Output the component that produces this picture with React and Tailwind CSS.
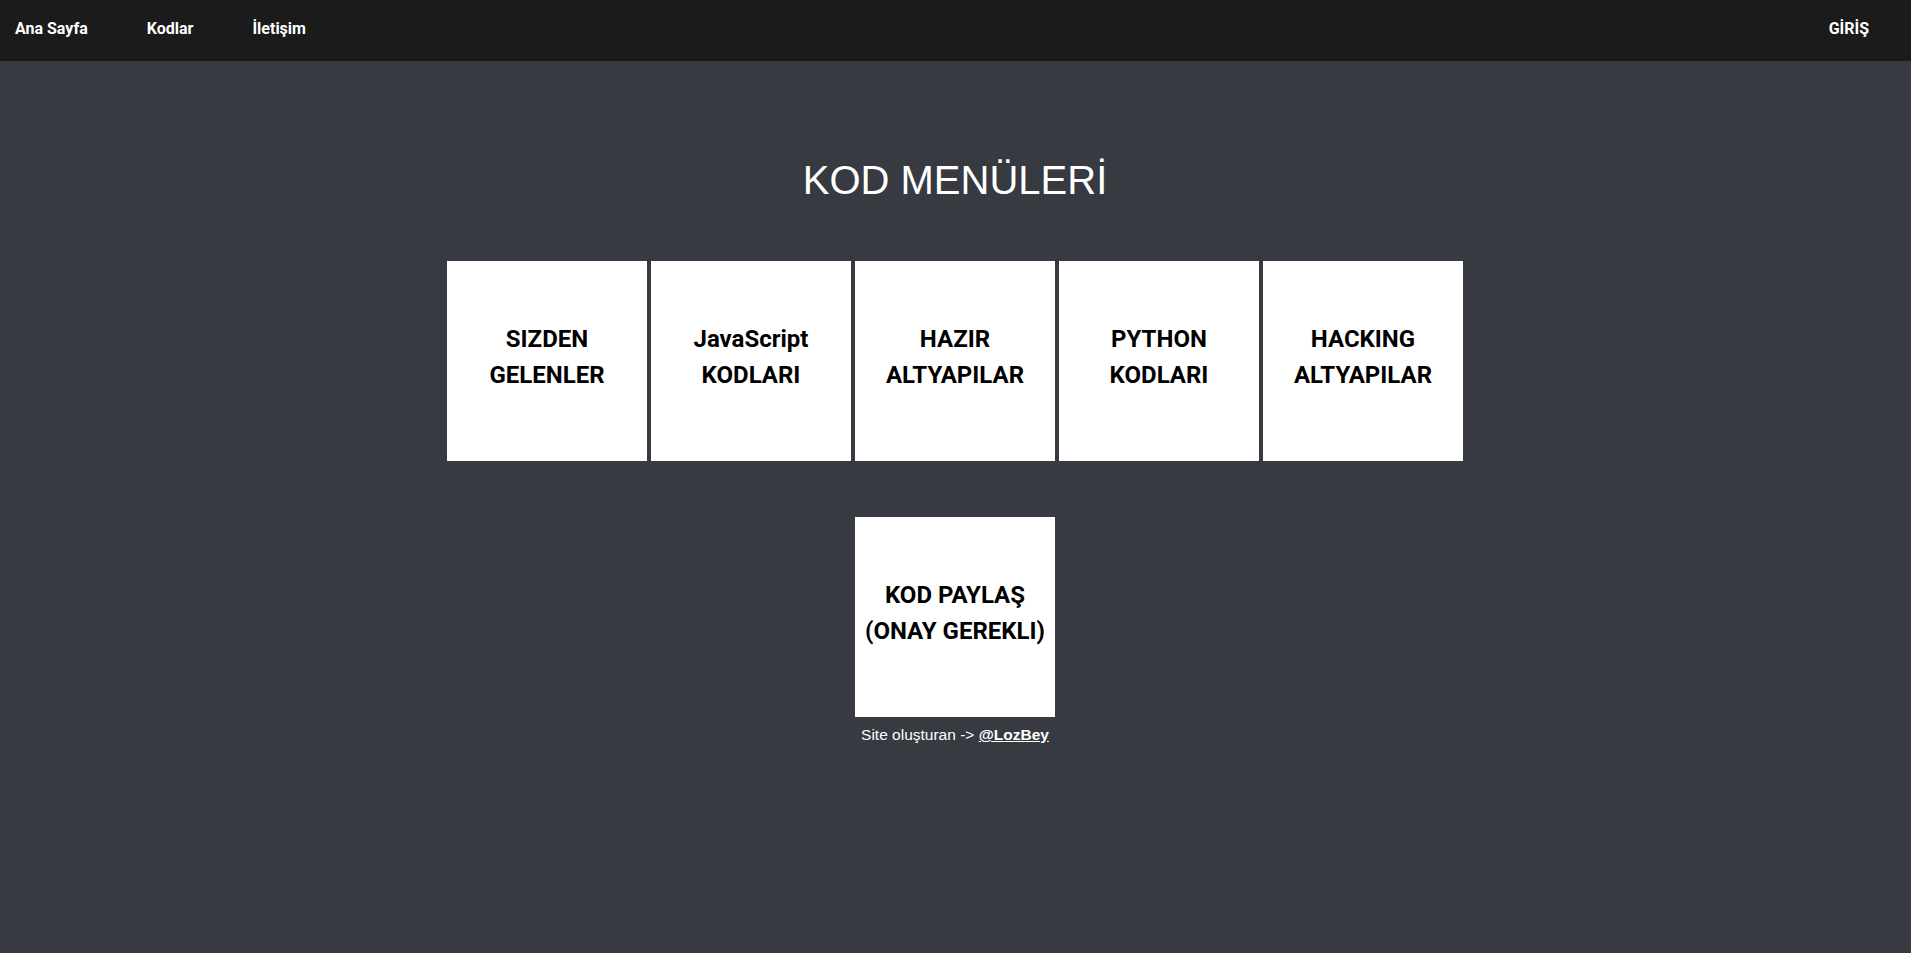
import React from "react";

const boxes = [
  ["SIZDEN", "GELENLER"],
  ["JavaScript", "KODLARI"],
  ["HAZIR", "ALTYAPILAR"],
  ["PYTHON", "KODLARI"],
  ["HACKING", "ALTYAPILAR"],
];

function Box({ lines }) {
  return (
    <div className="w-[200px] h-[200px] bg-white flex items-center justify-center text-center pb-2 cursor-pointer">
      <div className="text-[24px] leading-[36px] font-bold text-black" style={{ fontFamily: "Roboto, sans-serif" }}>
        {lines.map((l, i) => (
          <div key={i}>{l}</div>
        ))}
      </div>
    </div>
  );
}

export default function App() {
  return (
    <div className="min-h-screen bg-[#373a41] flex flex-col" style={{ fontFamily: '"Liberation Sans", Arial, sans-serif' }}>
      <nav className="h-[61px] bg-[#1b1b1b] flex items-center justify-between pb-1 pl-[15px] pr-[42px] text-white font-bold text-[16px]" style={{ fontFamily: "Roboto, sans-serif" }}>
        <div className="flex items-center gap-[59px]">
          <a href="#" className="text-white">Ana Sayfa</a>
          <a href="#" className="text-white">Kodlar</a>
          <a href="#" className="text-white">İletişim</a>
        </div>
        <a href="#" className="text-white">GİRİŞ</a>
      </nav>
      <main className="flex flex-col items-center pr-[1px]">
        <h1 className="mt-[96px] text-[40px] font-normal text-white leading-[46px]">KOD MENÜLERİ</h1>
        <div className="mt-[58px] flex gap-[4px]">
          {boxes.map((b, i) => (
            <Box key={i} lines={b} />
          ))}
        </div>
        <div className="mt-[56px]">
          <Box lines={["KOD PAYLAŞ", "(ONAY GEREKLI)"]} />
        </div>
        <p className="mt-[9px] text-[15.5px] text-white leading-[18px]">
          Site oluşturan -&gt; <a href="#" className="font-bold underline text-white">@LozBey</a>
        </p>
      </main>
    </div>
  );
}
